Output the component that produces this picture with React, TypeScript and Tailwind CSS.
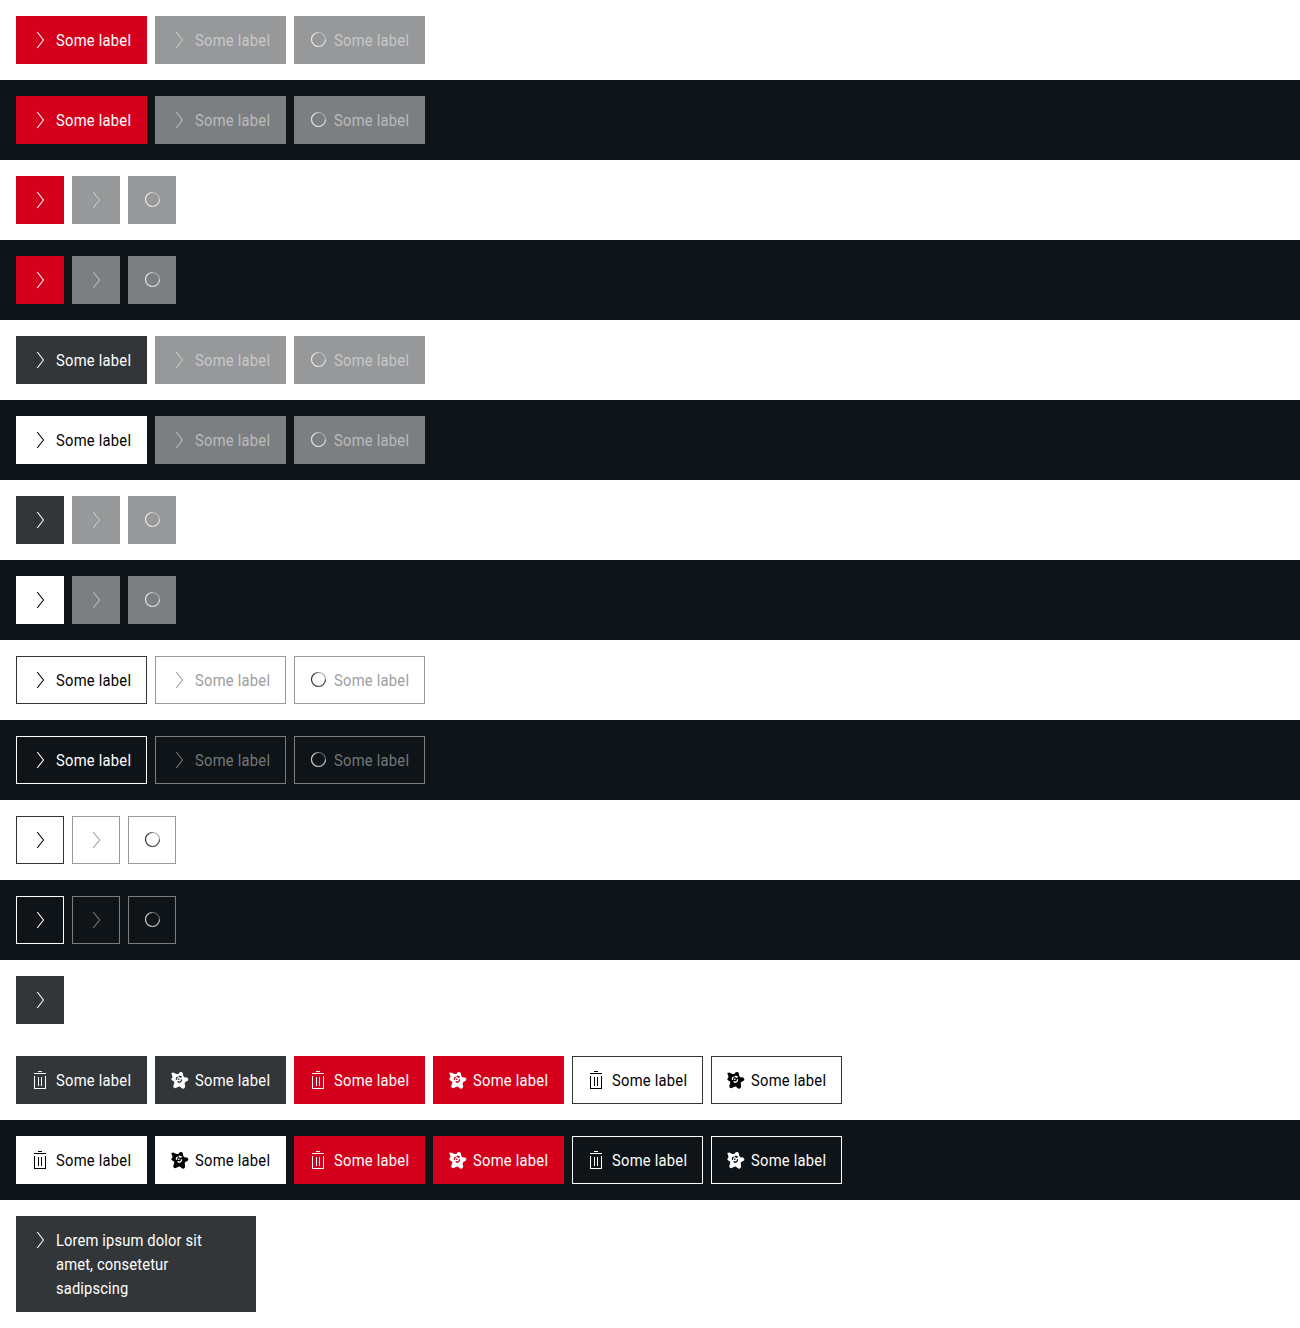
type Look = {
  box: string;
  icon?: string;
};

type IconName = 'arrow' | 'spinner' | 'trash' | 'flower';

const looks = {
  red: { box: 'border-[#d5001c] bg-[#d5001c] text-white' },
  charcoal: { box: 'border-[#323639] bg-[#323639] text-white' },
  white: { box: 'border-white bg-white text-black' },
  outline: { box: 'border-[#323639] text-black' },
  outlineDark: { box: 'border-white text-white' },
  off: { box: 'border-[#96989a] bg-[#96989a] text-[#c8c9ca]', icon: 'text-white' },
  offDark: { box: 'border-[#7c7f81] bg-[#7c7f81] text-[#babcbd]', icon: 'text-white' },
  offOutline: { box: 'border-[#96989a] text-[#9c9ea0]', icon: 'text-black' },
  offOutlineDark: { box: 'border-[#7c7f81] text-[#75787a]', icon: 'text-white' },
} satisfies Record<string, Look>;

type LookName = keyof typeof looks;

function Icon({ name }: { name: IconName }) {
  if (name === 'arrow') {
    return (
      <svg viewBox="0 0 24 24" className="size-6" fill="none" stroke="currentColor" strokeWidth="1.1">
        <path d="M9.2 4 15.5 12 9.2 20" />
      </svg>
    );
  }
  if (name === 'trash') {
    return (
      <svg viewBox="0 0 24 24" className="size-6" fill="currentColor">
        <path d="M10 3h4v1h-4zM6 5h12v1H6zM6 8h1v12h10V8h1v13H6zM10 9h1v9h-1zM13 9h1v9h-1z" />
      </svg>
    );
  }
  if (name === 'flower') {
    return (
      <svg viewBox="0 0 24 24" className="size-6" fill="currentColor">
        <path
          fillRule="evenodd"
          d="M4.3 4.9 6.3 4.6 9.4 5.9l2 .1 1.3-1.8 1.9-.3 1 .8.8 3.6.9.9 2.8.4 1.3 1.4-.4 1.4-3 1.8-.3 1.2.5 3.3-1.1 1.8-1.5.2-2.9-2.1-1.3.1-3.1 1.6-1.8-.8-.2-1.7 1-2.8-.3-1.4-2.5-1.5-.1-1.3 1.2-1.8zM12.8 7.6l-1.4.7.5 1.1 1.3-.2.3.9 1-.3.5-1.3zM10.3 8.4 9 9.6l-.3 1.8 1 .7.6-.5-.2-1.1.9-1zM15 10.9l-1.2.6-.1 1.2-1.1.8-1.1-.5-1.2.2.6 1.3 1.6.4 1.8-.9.9-1.8zM11.2 10.6l-.3.9.8.6.8-.4.1-.9-.7-.4z"
        />
      </svg>
    );
  }
  return (
    <svg viewBox="0 0 24 24" className="size-6" fill="none" stroke="currentColor" strokeWidth="1.1">
      <circle cx="12.5" cy="11.5" r="7" opacity=".35" />
      <path d="M19.5 11.5a7 7 0 0 1-7 7" opacity=".6" />
      <path d="M12.5 18.5a7 7 0 0 1-7-7 7 7 0 0 1 3.5-6.06" opacity=".7" />
      <path d="M9 5.44a7 7 0 0 1 3.5-.94" opacity=".4" />
    </svg>
  );
}

function Button({ look, icon, label }: { look: LookName; icon: IconName; label?: string }) {
  const style: Look = looks[look];
  const long = label !== undefined && label.length > 12;
  return (
    <button
      type="button"
      className={`flex min-h-12 items-start border px-[11px] py-[11px] text-left text-[16px] leading-6 ${
        long ? 'w-60' : label ? 'w-[131px]' : 'w-12'
      } ${style.box}`}
    >
      <span className={`shrink-0 ${icon === 'spinner' ? style.icon : ''}`}>
        <Icon name={icon} />
      </span>
      {label && (
        <span
          className={`ml-1 mt-px -mb-px origin-left scale-x-[0.92] ${
            long ? 'w-[170px] shrink-0 tracking-[0.15px]' : 'whitespace-nowrap tracking-[0.27px]'
          }`}
        >
          {label}
        </span>
      )}
    </button>
  );
}

type Row = { dark?: boolean; label?: boolean; items: [LookName, IconName][] };

const states = (base: LookName, off: LookName): [LookName, IconName][] => [
  [base, 'arrow'],
  [off, 'arrow'],
  [off, 'spinner'],
];

const icons = (...names: LookName[]) =>
  names.flatMap((name): [LookName, IconName][] => [
    [name, 'trash'],
    [name, 'flower'],
  ]);

const rows: Row[] = [
  { label: true, items: states('red', 'off') },
  { label: true, dark: true, items: states('red', 'offDark') },
  { items: states('red', 'off') },
  { dark: true, items: states('red', 'offDark') },
  { label: true, items: states('charcoal', 'off') },
  { label: true, dark: true, items: states('white', 'offDark') },
  { items: states('charcoal', 'off') },
  { dark: true, items: states('white', 'offDark') },
  { label: true, items: states('outline', 'offOutline') },
  { label: true, dark: true, items: states('outlineDark', 'offOutlineDark') },
  { items: states('outline', 'offOutline') },
  { dark: true, items: states('outlineDark', 'offOutlineDark') },
  { items: [['charcoal', 'arrow']] },
  { label: true, items: icons('charcoal', 'red', 'outline') },
  { label: true, dark: true, items: icons('white', 'red', 'outlineDark') },
];

export default function App() {
  return (
    <main className="min-h-screen bg-white font-['Roboto',sans-serif]">
      {rows.map((row, index) => (
        <section key={index} className={`flex gap-2 p-4 ${row.dark ? 'bg-[#0e1418]' : 'bg-white'}`}>
          {row.items.map(([look, icon], i) => (
            <Button key={i} look={look} icon={icon} label={row.label ? 'Some label' : undefined} />
          ))}
        </section>
      ))}
      <section className="flex p-4">
        <Button look="charcoal" icon="arrow" label="Lorem ipsum dolor sit amet, consetetur sadipscing" />
      </section>
    </main>
  );
}
